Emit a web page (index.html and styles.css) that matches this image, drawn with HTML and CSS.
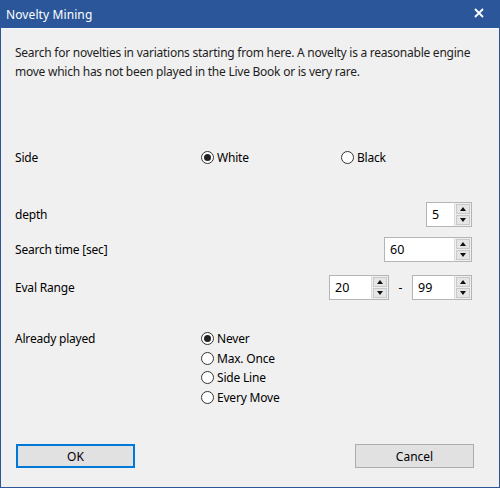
FILE: index.html
```html
<!DOCTYPE html>
<html>
<head>
<meta charset="utf-8">
<link rel="stylesheet" href="styles.css">
</head>
<body>
<div class="window">
  <div class="titlebar">
    <span class="title">Novelty Mining</span>
    <span class="close">
      <svg width="10" height="10" viewBox="0 0 10 10"><path d="M1 1 L9 9 M9 1 L1 9" stroke="#fff" stroke-width="1.8"/></svg>
    </span>
  </div>
  <div class="content">
    <p class="desc">Search for novelties in variations starting from here. A novelty is a reasonable engine move which has not been played in the Live Book or is very rare.</p>

    <div class="row side-row">
      <span class="label">Side</span>
      <div class="radios-inline">
        <label class="radio checked"><span class="dot"></span>White</label>
        <label class="radio black"><span class="dot"></span>Black</label>
      </div>
    </div>

    <div class="row form-row r-depth">
      <span class="label">depth</span>
      <div class="spin w-small"><span class="val">5</span><span class="btns"><span class="b up"></span><span class="b down"></span></span></div>
    </div>

    <div class="row form-row r-time">
      <span class="label">Search time [sec]</span>
      <div class="spin w-wide"><span class="val">60</span><span class="btns"><span class="b up"></span><span class="b down"></span></span></div>
    </div>

    <div class="row form-row r-eval">
      <span class="label">Eval Range</span>
      <div class="range">
        <div class="spin w-mid"><span class="val">20</span><span class="btns"><span class="b up"></span><span class="b down"></span></span></div>
        <span class="dash">-</span>
        <div class="spin w-mid"><span class="val">99</span><span class="btns"><span class="b up"></span><span class="b down"></span></span></div>
      </div>
    </div>

    <div class="row played-row">
      <span class="label">Already played</span>
      <div class="radios-stack">
        <label class="radio checked"><span class="dot"></span>Never</label>
        <label class="radio"><span class="dot"></span>Max. Once</label>
        <label class="radio"><span class="dot"></span>Side Line</label>
        <label class="radio"><span class="dot"></span>Every Move</label>
      </div>
    </div>

    <div class="buttons">
      <button class="btn ok">OK</button>
      <button class="btn">Cancel</button>
    </div>
  </div>
</div>
</body>
</html>
```
FILE: styles.css
```css
html, body {
  margin: 0;
  padding: 0;
}
body {
  width: 500px;
  height: 488px;
  font-family: "Noto Sans", "Open Sans", "DejaVu Sans", sans-serif;
  font-size: 12px;
  color: #000;
  background: #f0f0f0;
}
.window {
  box-sizing: border-box;
  width: 500px;
  height: 488px;
  border: 1px solid #2b579a;
  border-top: 0;
  background: #f0f0f0;
  display: flex;
  flex-direction: column;
}
.titlebar {
  height: 28px;
  background: #2b579a;
  display: flex;
  align-items: center;
  justify-content: space-between;
  padding: 0 16px 0 6px;
  flex-shrink: 0;
  margin: 0 -1px;
}
.title {
  color: #fff;
  font-size: 12px;
  letter-spacing: 0.1px;
  padding-top: 1px;
}
.close {
  display: flex;
  width: 10px;
  height: 10px;
  margin-top: -2px;
}
.content {
  flex: 1;
  display: flex;
  flex-direction: column;
  padding: 14px 27px 0 14px;
  border-top: 1px solid #f7f7f7;
}
.desc {
  margin: 0;
  line-height: 19px;
  letter-spacing: -0.25px;
  color: #1e1e1e;
}
.row {
  display: flex;
  align-items: center;
}
.label {
  width: 186px;
  flex-shrink: 0;
  letter-spacing: -0.2px;
}
.side-row {
  margin-top: 65px;
  height: 22px;
}
.radios-inline {
  display: flex;
}
.radio {
  display: flex;
  align-items: center;
  gap: 3px;
  height: 19.6px;
  letter-spacing: -0.2px;
}
.radios-inline .radio {
  width: 140px;
}
.dot {
  box-sizing: border-box;
  width: 13px;
  height: 13px;
  border-radius: 50%;
  border: 1px solid #333;
  background: #fff;
  position: relative;
}
.checked .dot::after {
  content: "";
  position: absolute;
  left: 2px;
  top: 2px;
  width: 7px;
  height: 7px;
  border-radius: 50%;
  background: #222;
}
.form-row {
  justify-content: space-between;
  height: 25px;
}
.r-depth { margin-top: 34px; }
.r-time { margin-top: 10px; }
.r-eval { margin-top: 13px; }
.spin {
  display: flex;
  height: 25px;
  box-sizing: border-box;
}
.val {
  box-sizing: border-box;
  background: #fff;
  border: 1px solid #b4b4b4;
  border-right: 0;
  height: 25px;
  display: flex;
  align-items: center;
  padding-left: 5px;
  font-size: 12.5px;
}
.w-small .val { width: 28px; }
.w-wide .val { width: 70px; }
.w-mid .val { width: 42px; }
.btns {
  box-sizing: border-box;
  width: 18px;
  height: 25px;
  border: 1px solid #b4b4b4;
  border-left: 1px solid #dcdcdc;
  background: #f0f0f0;
  display: flex;
  flex-direction: column;
  padding: 1px;
  gap: 1px;
}
.b {
  flex: 1;
  background: #e5e5e5;
  border: 1px solid #c8c8c8;
  display: flex;
  align-items: center;
  justify-content: center;
}
.b::after {
  content: "";
  width: 0;
  height: 0;
  border-left: 3.5px solid transparent;
  border-right: 3.5px solid transparent;
}
.up::after { border-bottom: 4px solid #111; }
.down::after { border-top: 4px solid #111; }
.range {
  display: flex;
  align-items: center;
}
.dash {
  width: 23px;
  text-align: center;
}
.played-row {
  margin-top: 29px;
  align-items: flex-start;
}
.played-row .label {
  padding-top: 1px;
}
.radios-stack {
  display: flex;
  flex-direction: column;
}
.buttons {
  margin-top: auto;
  margin-bottom: 19px;
  margin-right: -2px;
  display: flex;
  justify-content: space-between;
  padding-left: 1px;
}
.btn {
  box-sizing: border-box;
  width: 119px;
  height: 24px;
  background: #e1e1e1;
  border: 1px solid #adadad;
  font-family: inherit;
  font-size: 12px;
  color: #000;
  padding: 0;
}
.btn.ok {
  border: 2px solid #0078d7;
}
```
